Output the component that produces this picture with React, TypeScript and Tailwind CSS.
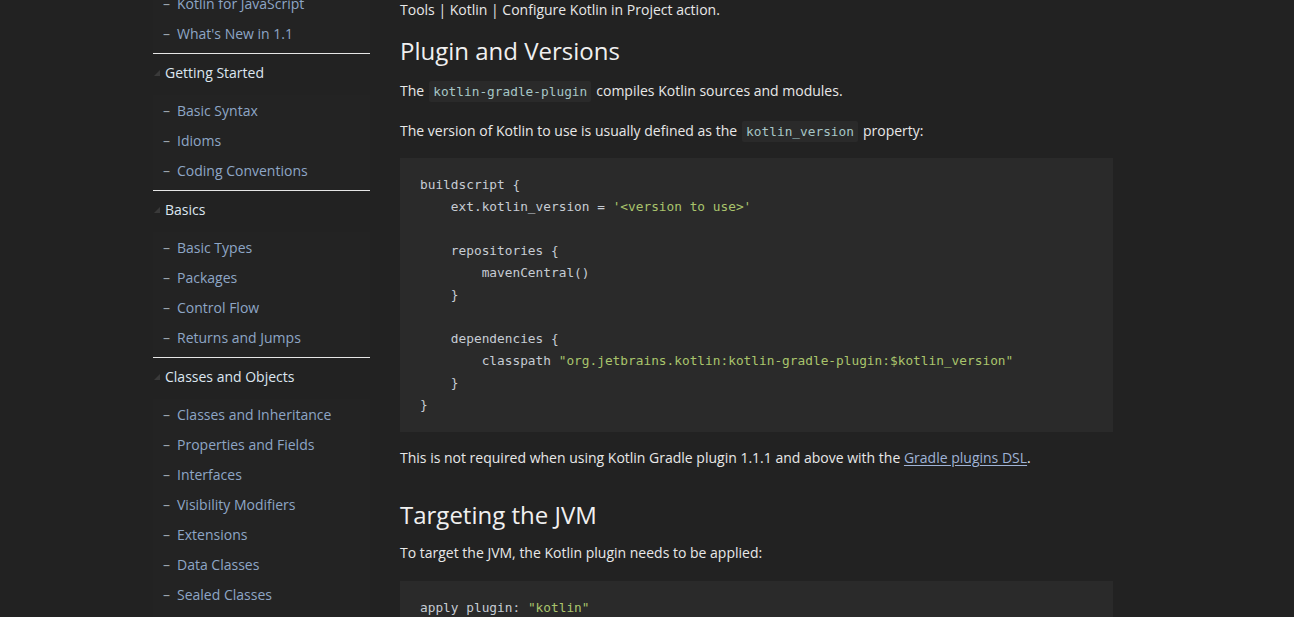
import type { ReactNode } from "react";

type Section = { title?: string; items: string[] };

const SECTIONS: Section[] = [
  { items: ["Kotlin for JavaScript", "What's New in 1.1"] },
  { title: "Getting Started", items: ["Basic Syntax", "Idioms", "Coding Conventions"] },
  { title: "Basics", items: ["Basic Types", "Packages", "Control Flow", "Returns and Jumps"] },
  {
    title: "Classes and Objects",
    items: [
      "Classes and Inheritance",
      "Properties and Fields",
      "Interfaces",
      "Visibility Modifiers",
      "Extensions",
      "Data Classes",
      "Sealed Classes",
      "Generics",
    ],
  },
];

const sans = { fontFamily: '"Open Sans", "Noto Sans", sans-serif' };

function Str({ children }: { children: ReactNode }) {
  return <span className="text-[#a9c46c]">{children}</span>;
}

function InlineCode({ children }: { children: ReactNode }) {
  return (
    <code className="mx-[5px] rounded-[2px] bg-[#2a2a2a] px-[4px] py-[3px] font-['DejaVu_Sans_Mono',monospace] text-[12.8px] leading-none text-[#a6c6c6]">
      {children}
    </code>
  );
}

function CodeBlock({ lines }: { lines: ReactNode[] }) {
  return (
    <pre className="bg-[#2a2a2a] px-[20px] py-[16px] font-['DejaVu_Sans_Mono',monospace] text-[12.8px] leading-[22px] text-[#c6ccd4]">
      {lines.map((l, i) => (
        <div key={i} className="h-[22px] whitespace-pre">
          {l}
        </div>
      ))}
    </pre>
  );
}

function Sidebar() {
  return (
    <aside className="-mt-[12px] w-[217px] shrink-0" style={sans}>
      {SECTIONS.map((s, i) => (
        <div key={i}>
          {s.title && (
            <>
              <div className="h-px bg-[#e6e6e6]" />
              <div className="relative mt-[8px] flex h-[20px] items-center pl-[12px] text-[14px] text-[#dde6f0]">
                <svg className="absolute left-[1px] top-[8px]" width="6" height="6" viewBox="0 0 6 6">
                  <path d="M6 0 L6 6 L0 6 Z" fill="#3a3a3a" />
                </svg>
                {s.title}
              </div>
            </>
          )}
          <ul className={`${s.title ? "mt-[13px]" : ""} bg-[#232323] pb-[5px]`}>
            {s.items.map((it) => (
              <li key={it} className="flex h-[30px] items-center text-[14px]">
                <span className="w-[24px] pl-[10px] text-[#9aa3ad]">–</span>
                <span className="text-[#8ea6c6]">{it}</span>
              </li>
            ))}
          </ul>
        </div>
      ))}
    </aside>
  );
}

export default function App() {
  return (
    <div className="h-screen overflow-hidden bg-[#222222]">
      <div className="flex gap-[30px] pl-[153px]">
        <Sidebar />

        <main className="-mt-[2px] w-[713px] shrink-0 text-[14px] leading-[24px] text-[#e8e8e8]" style={sans}>
          <p>Tools | Kotlin | Configure Kotlin in Project action.</p>

          <h2 className="mt-[13px] text-[24px] leading-[32px] font-normal text-[#f0f0f0]">Plugin and Versions</h2>

          <p className="mt-[12px]">
            The<InlineCode>kotlin-gradle-plugin</InlineCode>compiles Kotlin sources and modules.
          </p>

          <p className="mt-[16px]">
            The version of Kotlin to use is usually defined as the<InlineCode>kotlin_version</InlineCode>property:
          </p>

          <div className="mt-[15px]">
            <CodeBlock
              lines={[
                "buildscript {",
                <>
                  {"    ext.kotlin_version = "}
                  <Str>'&lt;version to use&gt;'</Str>
                </>,
                "",
                "    repositories {",
                "        mavenCentral()",
                "    }",
                "",
                "    dependencies {",
                <>
                  {"        classpath "}
                  <Str>"org.jetbrains.kotlin:kotlin-gradle-plugin:$kotlin_version"</Str>
                </>,
                "    }",
                "}",
              ]}
            />
          </div>

          <p className="mt-[14px]">
            This is not required when using Kotlin Gradle plugin 1.1.1 and above with the{" "}
            <a href="#" className="text-[#9fb3d6] underline underline-offset-2">
              Gradle plugins DSL
            </a>
            .
          </p>

          <h2 className="mt-[29px] text-[24px] leading-[32px] font-normal text-[#f0f0f0]">Targeting the JVM</h2>

          <p className="mt-[10px]">To target the JVM, the Kotlin plugin needs to be applied:</p>

          <div className="mt-[16px]">
            <CodeBlock
              lines={[
                <>
                  {"apply plugin: "}
                  <Str>"kotlin"</Str>
                </>,
              ]}
            />
          </div>
        </main>
      </div>
    </div>
  );
}
